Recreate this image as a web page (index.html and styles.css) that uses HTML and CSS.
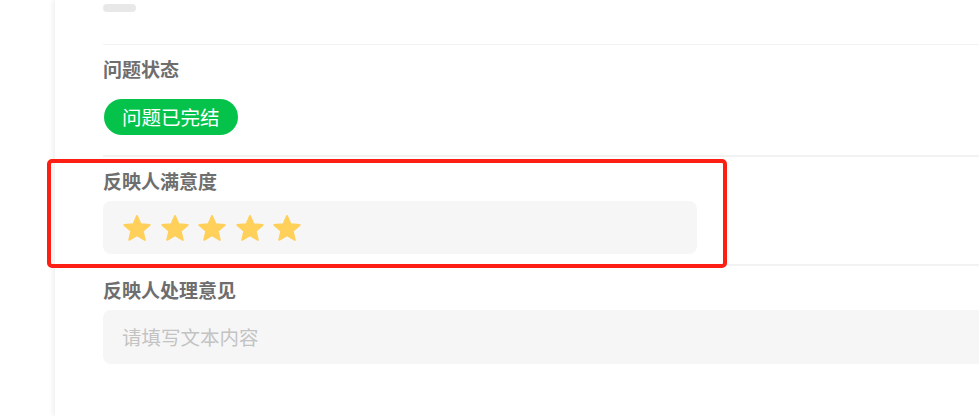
FILE: index.html
```html
<!DOCTYPE html>
<html lang="zh-CN">
<head>
  <meta charset="UTF-8" />
  <meta name="viewport" content="width=device-width, initial-scale=1.0" />
  <title>问题详情</title>
  <link rel="stylesheet" href="styles.css">
</head>
<body>
  <div class="sheet">
    <div class="stub"></div>

    <div class="field field-status">
      <div class="field-label">问题状态</div>
      <span class="status-pill">问题已完结</span>
    </div>

    <div class="field">
      <div class="field-label">反映人满意度</div>
      <div class="rate-box">
        <svg class="star" viewBox="1.2 1.4 21.6 20.4"><path d="M12 17.27L18.18 21l-1.64-7.03L22 9.24l-7.19-.61L12 2 9.19 8.63 2 9.24l5.46 4.73L5.82 21z"/></svg>
        <svg class="star" viewBox="1.2 1.4 21.6 20.4"><path d="M12 17.27L18.18 21l-1.64-7.03L22 9.24l-7.19-.61L12 2 9.19 8.63 2 9.24l5.46 4.73L5.82 21z"/></svg>
        <svg class="star" viewBox="1.2 1.4 21.6 20.4"><path d="M12 17.27L18.18 21l-1.64-7.03L22 9.24l-7.19-.61L12 2 9.19 8.63 2 9.24l5.46 4.73L5.82 21z"/></svg>
        <svg class="star" viewBox="1.2 1.4 21.6 20.4"><path d="M12 17.27L18.18 21l-1.64-7.03L22 9.24l-7.19-.61L12 2 9.19 8.63 2 9.24l5.46 4.73L5.82 21z"/></svg>
        <svg class="star" viewBox="1.2 1.4 21.6 20.4"><path d="M12 17.27L18.18 21l-1.64-7.03L22 9.24l-7.19-.61L12 2 9.19 8.63 2 9.24l5.46 4.73L5.82 21z"/></svg>
      </div>
    </div>

    <div class="field">
      <div class="field-label">反映人处理意见</div>
      <textarea class="opinion" placeholder="请填写文本内容"></textarea>
    </div>
  </div>

  <!-- 标注框 -->
  <div class="mark-box"></div>
</body>
</html>
```

FILE: styles.css
```css
html, body { margin: 0; padding: 0; }
body { position: relative; height: 416px; overflow: hidden; background-color: #ffffff; font-family: "Noto Sans CJK SC", "Noto Sans", sans-serif; color: #333; }
.sheet { margin-left: 55px; width: 1100px; min-height: 416px; padding: 4px 0 0 48px; box-sizing: border-box; background-color: #fff; box-shadow: -2px 0 5px rgba(0, 0, 0, 0.07); }
.stub { width: 33px; height: 8px; border-radius: 4px; background-color: #e8e8e8; margin-bottom: 32px; }
.field { border-top: 2px solid #f2f2f2; padding-top: 11px; padding-bottom: 10px; }
.field-status { border-top-width: 1px; padding-top: 11px; padding-bottom: 20px; }
.field-label { font-size: 19px; line-height: 26px; font-weight: 700; color: #6e6e6e; margin-bottom: 7px; }
.field-status .field-label { margin-bottom: 17px; }
.status-pill { display: inline-flex; align-items: center; height: 36px; padding: 0 18px; margin-left: 1px; border-radius: 18px; background-color: #05c34a; color: #fff; font-size: 19.5px; line-height: 36px; }
.rate-box { display: flex; align-items: center; gap: 9.5px; width: 594px; height: 53px; padding-left: 20px; box-sizing: border-box; border-radius: 8px; background-color: #f6f6f6; }
.star { width: 28px; height: 26px; }
.star path { fill: #ffd05a; stroke: #ffd05a; stroke-width: 1.4; stroke-linejoin: round; }
.opinion { display: block; width: 100%; height: 54px; padding: 12px 19px; box-sizing: border-box; border: none; border-radius: 8px; background-color: #f6f6f6; font-family: inherit; font-size: 19.5px; line-height: 30px; resize: none; outline: none; color: #333; }
.opinion::placeholder { color: #c3c3c3; }
.mark-box { position: absolute; left: 47px; top: 159px; width: 680px; height: 109px; box-sizing: border-box; border: 4px solid #fe1f14; border-radius: 5px; }
```
